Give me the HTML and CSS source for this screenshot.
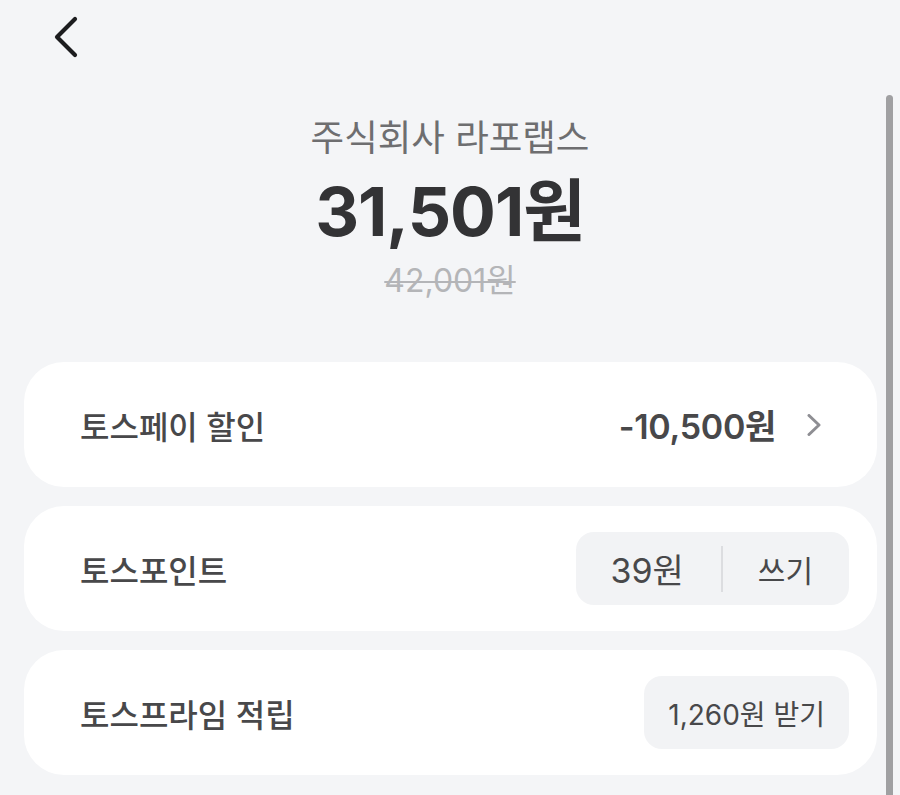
FILE: index.html
```html
<!DOCTYPE html>
<html lang="ko">
<head>
<meta charset="utf-8">
<title>결제</title>
<link rel="stylesheet" href="styles.css">
</head>
<body>
<div class="page">
  <header class="topbar">
    <button class="back" aria-label="뒤로">
      <svg width="30" height="44" viewBox="0 0 30 44"><path d="M22 3 L4 21 L22 39" fill="none" stroke="#1c1c1e" stroke-width="4.2" stroke-linecap="round" stroke-linejoin="round"/></svg>
    </button>
  </header>

  <section class="summary">
    <div class="merchant">주식회사 라포랩스</div>
    <div class="amount">31,501원</div>
    <div class="original">42,001원</div>
  </section>

  <section class="cards">
    <div class="card">
      <div class="label">토스페이 할인</div>
      <div class="right">
        <span class="discount">-10,500원</span>
        <svg class="chev" width="14" height="22" viewBox="0 0 14 22"><path d="M2 1.5 L12 11 L2 20.5" fill="none" stroke="#8e8e93" stroke-width="3" stroke-linecap="round" stroke-linejoin="round"/></svg>
      </div>
    </div>
    <div class="card">
      <div class="label">토스포인트</div>
      <div class="pill split">
        <span class="seg seg-a">39원</span>
        <span class="divider"></span>
        <span class="seg seg-b">쓰기</span>
      </div>
    </div>
    <div class="card">
      <div class="label">토스프라임 적립</div>
      <div class="pill single">1,260원 받기</div>
    </div>
  </section>

  <div class="scrollbar"></div>
</div>
</body>
</html>
```

FILE: styles.css
```css
* { box-sizing: border-box; }
html, body {
  margin: 0;
  padding: 0;
  background: #f4f5f7;
}
body {
  font-family: Inter, "Noto Sans CJK KR", sans-serif;
  color: #333333;
  width: 900px;
  height: 795px;
  overflow: hidden;
}
.page {
  position: relative;
  width: 900px;
  height: 795px;
}
.topbar {
  height: 76px;
  padding: 16px 0 0 53px;
}
.back {
  border: 0;
  background: none;
  padding: 0;
  display: block;
  cursor: pointer;
}
.back svg { display: block; }

.summary {
  display: flex;
  flex-direction: column;
  align-items: center;
  padding-top: 41px;
}
.merchant {
  font-size: 36.5px;
  line-height: 42px;
  color: #6e6e70;
  font-weight: 400;
}
.amount {
  margin-top: 13px;
  font-size: 68px;
  line-height: 78px;
  font-weight: 700;
  color: #333335;
  letter-spacing: -1px;
}
.original {
  margin-top: 12px;
  font-size: 32px;
  line-height: 38px;
  color: #b4b5b8;
  text-decoration: line-through;
  text-decoration-thickness: 2px;
}

.cards {
  display: flex;
  flex-direction: column;
  gap: 19px;
  padding: 0 23px 0 24px;
  margin-top: 62px;
}
.card {
  background: #ffffff;
  border-radius: 40px;
  height: 125px;
  display: flex;
  align-items: center;
  justify-content: space-between;
  padding: 0 28px 0 56px;
}
.label {
  font-size: 32px;
  font-weight: 500;
  color: #48484a;
}
.right {
  display: flex;
  align-items: center;
  gap: 31px;
  padding-right: 28px;
}
.discount {
  font-size: 34px;
  font-weight: 600;
  color: #48484a;
  letter-spacing: -0.3px;
}
.chev { display: block; }

.pill {
  background: #f2f3f5;
  border-radius: 18px;
  height: 73px;
  display: flex;
  align-items: center;
  color: #48484a;
}
.seg {
  font-size: 30px;
}
.seg-a {
  font-size: 34px;
  padding: 0 37px 0 34px;
}
.seg-b {
  padding: 0 36px 0 35px;
}
.divider {
  width: 2px;
  height: 46px;
  background: #dcdde0;
}
.single {
  font-size: 28px;
  padding: 0 24px;
}

.scrollbar {
  position: absolute;
  right: 7px;
  top: 95px;
  bottom: 0;
  width: 7px;
  background: #a0a0a2;
  border-radius: 4px 4px 0 0;
}
```
